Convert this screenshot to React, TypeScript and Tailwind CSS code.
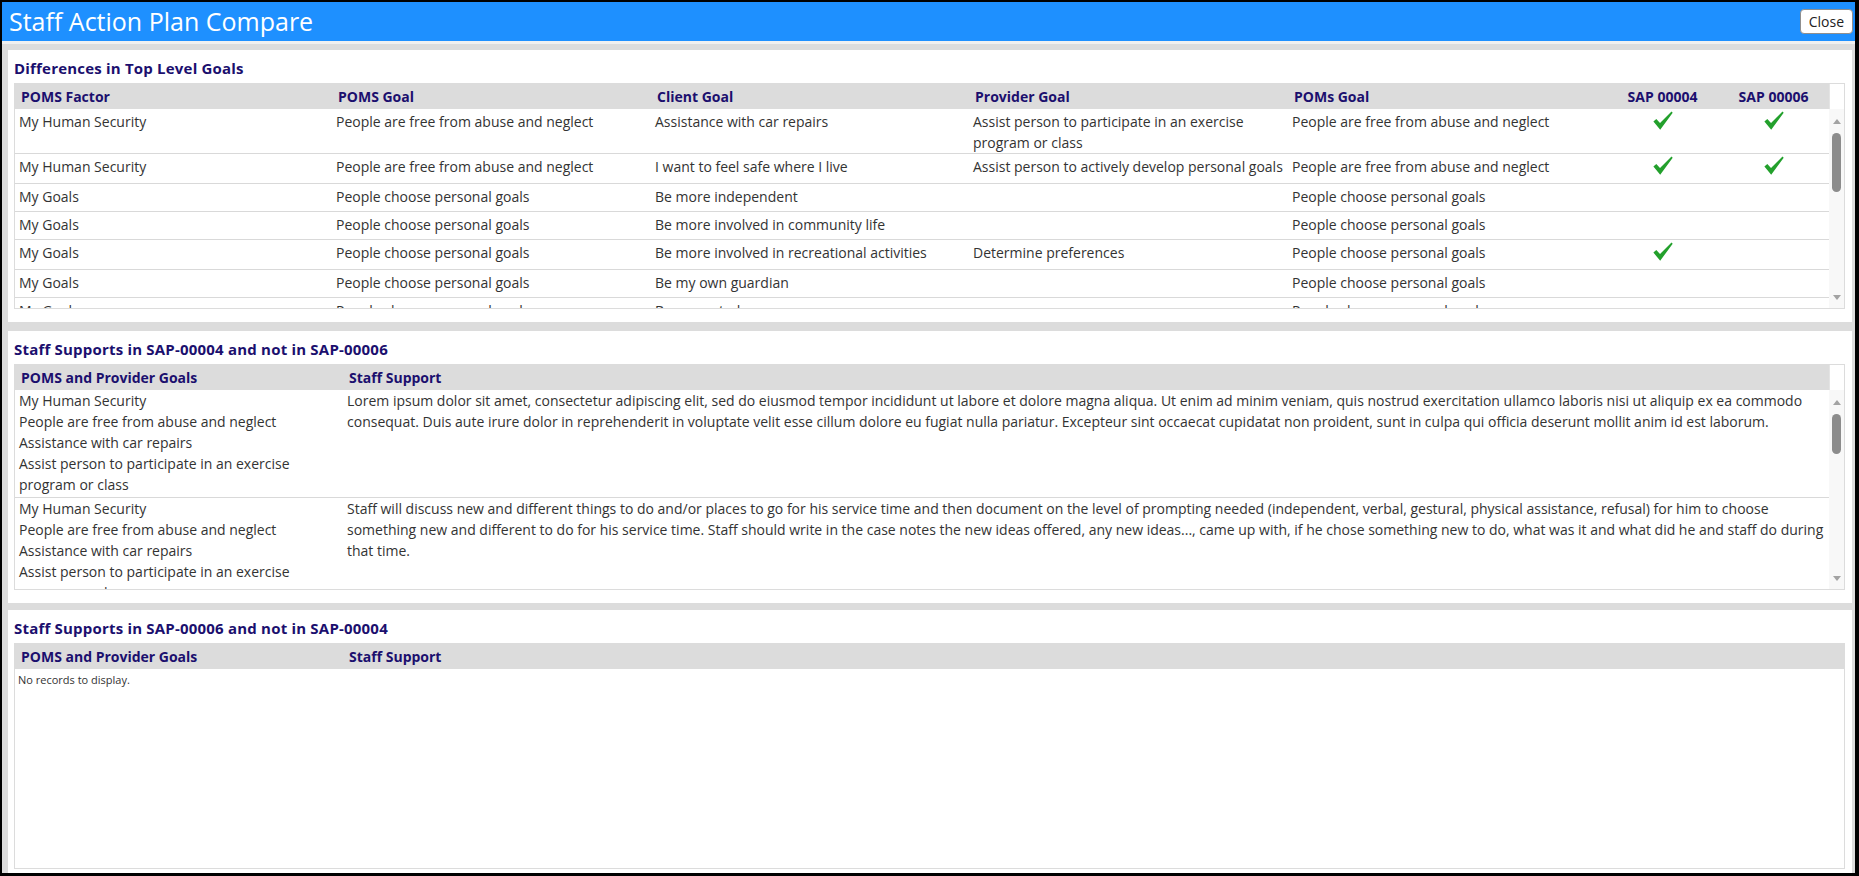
import React from "react";

type GoalRow = {
  factor: string;
  pomsGoal: string;
  clientGoal: string;
  providerGoal: string;
  pomsGoalAlt: string;
  sap4: boolean;
  sap6: boolean;
};

const goalRows: GoalRow[] = [
  {
    factor: "My Human Security",
    pomsGoal: "People are free from abuse and neglect",
    clientGoal: "Assistance with car repairs",
    providerGoal: "Assist person to participate in an exercise program or class",
    pomsGoalAlt: "People are free from abuse and neglect",
    sap4: true,
    sap6: true,
  },
  {
    factor: "My Human Security",
    pomsGoal: "People are free from abuse and neglect",
    clientGoal: "I want to feel safe where I live",
    providerGoal: "Assist person to actively develop personal goals",
    pomsGoalAlt: "People are free from abuse and neglect",
    sap4: true,
    sap6: true,
  },
  {
    factor: "My Goals",
    pomsGoal: "People choose personal goals",
    clientGoal: "Be more independent",
    providerGoal: "",
    pomsGoalAlt: "People choose personal goals",
    sap4: false,
    sap6: false,
  },
  {
    factor: "My Goals",
    pomsGoal: "People choose personal goals",
    clientGoal: "Be more involved in community life",
    providerGoal: "",
    pomsGoalAlt: "People choose personal goals",
    sap4: false,
    sap6: false,
  },
  {
    factor: "My Goals",
    pomsGoal: "People choose personal goals",
    clientGoal: "Be more involved in recreational activities",
    providerGoal: "Determine preferences",
    pomsGoalAlt: "People choose personal goals",
    sap4: true,
    sap6: false,
  },
  {
    factor: "My Goals",
    pomsGoal: "People choose personal goals",
    clientGoal: "Be my own guardian",
    providerGoal: "",
    pomsGoalAlt: "People choose personal goals",
    sap4: false,
    sap6: false,
  },
  {
    factor: "My Goals",
    pomsGoal: "People choose personal goals",
    clientGoal: "Be respected",
    providerGoal: "",
    pomsGoalAlt: "People choose personal goals",
    sap4: false,
    sap6: false,
  },
];

const goalLines = [
  "My Human Security",
  "People are free from abuse and neglect",
  "Assistance with car repairs",
  "Assist person to participate in an exercise program or class",
];

const supportRows = [
  {
    goals: goalLines,
    support:
      "Lorem ipsum dolor sit amet, consectetur adipiscing elit, sed do eiusmod tempor incididunt ut labore et dolore magna aliqua. Ut enim ad minim veniam, quis nostrud exercitation ullamco laboris nisi ut aliquip ex ea commodo consequat. Duis aute irure dolor in reprehenderit in voluptate velit esse cillum dolore eu fugiat nulla pariatur. Excepteur sint occaecat cupidatat non proident, sunt in culpa qui officia deserunt mollit anim id est laborum.",
  },
  {
    goals: goalLines,
    support:
      "Staff will discuss new and different things to do and/or places to go for his service time and then document on the level of prompting needed (independent, verbal, gestural, physical assistance, refusal) for him to choose something new and different to do for his service time. Staff should write in the case notes the new ideas offered, any new ideas..., came up with, if he chose something new to do, what was it and what did he and staff do during that time.",
  },
];

const goalCols = "grid grid-cols-[317px_319px_318px_319px_319px_111px_111px]";
const supportCols = "grid grid-cols-[328px_1486px]";
const emptyCols = "grid grid-cols-[328px_1501px]";

function Check() {
  return (
    <svg width="20" height="19" viewBox="0 0 20 19">
      <path d="M0.4 10.6L3.3 7.9L7 11.9L18.5 0.4L19.7 1.7L7.2 18.7Z" fill="#23a02c" />
    </svg>
  );
}

function ScrollTrack({ thumbClass }: { thumbClass: string }) {
  return (
    <div className="flex w-[15px] shrink-0 flex-col items-center bg-[#f8f8f8] pt-[10px] pb-[8px]">
      <svg width="8" height="5" viewBox="0 0 8 5">
        <path d="M4 0L8 5H0Z" fill="#a3a3a3" />
      </svg>
      <div className={`mt-[9px] w-[9px] rounded-full bg-[#8c8c8c] ${thumbClass}`} />
      <div className="flex-1" />
      <svg width="8" height="5" viewBox="0 0 8 5">
        <path d="M0 0H8L4 5Z" fill="#a3a3a3" />
      </svg>
    </div>
  );
}

function Panel({ title, className = "", children }: { title: string; className?: string; children: React.ReactNode }) {
  return (
    <section className={`shrink-0 bg-white pt-[8px] pr-[7px] pb-[13px] pl-[6px] ${className}`}>
      <h2 className="mb-[5px] h-[20px] text-[15px] leading-[20px] font-bold tracking-[0.2px] text-[#1b0f6e]">{title}</h2>
      {children}
    </section>
  );
}

function HeaderCell({ children, center }: { children: React.ReactNode; center?: boolean }) {
  return <div className={center ? "text-center" : "pl-[6px]"}>{children}</div>;
}

export default function App() {
  return (
    <div className="flex h-[876px] w-[1859px] flex-col overflow-hidden border-t-2 border-r-4 border-b-[3px] border-l-2 border-black bg-[#dcdcdc] font-['Open_Sans',sans-serif]">
      <header className="flex h-[39px] shrink-0 items-center justify-between bg-[#1e90ff] pr-[2px] pl-[7px]">
        <h1 className="text-[25px] leading-[39px] font-normal text-white">Staff Action Plan Compare</h1>
        <button className="h-[25px] rounded-[4px] border border-[#8f8f8f] bg-white px-[8px] text-[14px] leading-[23px] text-[#222]">
          Close
        </button>
      </header>
      <div className="h-[3px] shrink-0 bg-[#f0f0f0]" />

      <main className="flex min-h-0 flex-1 flex-col pt-[6px] pr-[3px] pl-[6px]">
        <Panel title="Differences in Top Level Goals">
          <div className="border border-[#dcdcdc]">
            <div className="flex">
              <div className={`${goalCols} h-[25px] w-[1814px] bg-[#dcdcdc] text-[14px] leading-[25px] font-bold text-[#1b0f6e]`}>
                <HeaderCell>POMS Factor</HeaderCell>
                <HeaderCell>POMS Goal</HeaderCell>
                <HeaderCell>Client Goal</HeaderCell>
                <HeaderCell>Provider Goal</HeaderCell>
                <HeaderCell>POMs Goal</HeaderCell>
                <HeaderCell center>SAP 00004</HeaderCell>
                <HeaderCell center>SAP 00006</HeaderCell>
              </div>
              <div className="w-[15px] border-l border-[#e4e4e4] bg-white" />
            </div>
            <div className="flex h-[199px]">
              <div className="w-[1814px] overflow-hidden">
                {goalRows.map((r, i) => (
                  <div
                    key={i}
                    className={`${goalCols} border-b border-[#d9d9d9] pt-[2px] text-[14px] leading-[21px] text-[#333] ${
                      r.sap4 || r.sap6 ? "min-h-[30px]" : "min-h-[28px]"
                    }`}
                  >
                    <div className="pl-[4px]">{r.factor}</div>
                    <div className="pl-[4px]">{r.pomsGoal}</div>
                    <div className="pl-[4px]">{r.clientGoal}</div>
                    <div className="pl-[4px]">{r.providerGoal}</div>
                    <div className="pl-[4px]">{r.pomsGoalAlt}</div>
                    <div className="flex justify-center">{r.sap4 && <Check />}</div>
                    <div className="flex justify-center">{r.sap6 && <Check />}</div>
                  </div>
                ))}
              </div>
              <ScrollTrack thumbClass="h-[59px]" />
            </div>
          </div>
        </Panel>

        <Panel title="Staff Supports in SAP-00004 and not in SAP-00006" className="mt-[9px]">
          <div className="border border-[#dcdcdc]">
            <div className="flex">
              <div className={`${supportCols} h-[25px] w-[1814px] bg-[#dcdcdc] text-[14px] leading-[25px] font-bold text-[#1b0f6e]`}>
                <HeaderCell>POMS and Provider Goals</HeaderCell>
                <HeaderCell>Staff Support</HeaderCell>
              </div>
              <div className="w-[15px] border-l border-[#e4e4e4] bg-white" />
            </div>
            <div className="flex h-[199px]">
              <div className="w-[1814px] overflow-hidden">
                {supportRows.map((r, i) => (
                  <div key={i} className={`${supportCols} border-b border-[#d9d9d9] pb-[2px] text-[14px] leading-[21px] text-[#333]`}>
                    <div className="pl-[4px]">
                      {r.goals.map((g) => (
                        <div key={g}>{g}</div>
                      ))}
                    </div>
                    <div className="pr-[2px] pl-[4px]">{r.support}</div>
                  </div>
                ))}
              </div>
              <ScrollTrack thumbClass="h-[40px]" />
            </div>
          </div>
        </Panel>

        <Panel title="Staff Supports in SAP-00006 and not in SAP-00004" className="mt-[7px] min-h-0 flex-1 overflow-hidden">
          <div className="border border-[#dcdcdc]">
            <div className={`${emptyCols} h-[25px] bg-[#dcdcdc] text-[14px] leading-[25px] font-bold text-[#1b0f6e]`}>
              <HeaderCell>POMS and Provider Goals</HeaderCell>
              <HeaderCell>Staff Support</HeaderCell>
            </div>
            <div className="h-[199px] pt-[3px] pl-[3px] text-[11px] leading-[16px] text-[#333]">No records to display.</div>
          </div>
        </Panel>
      </main>
    </div>
  );
}
